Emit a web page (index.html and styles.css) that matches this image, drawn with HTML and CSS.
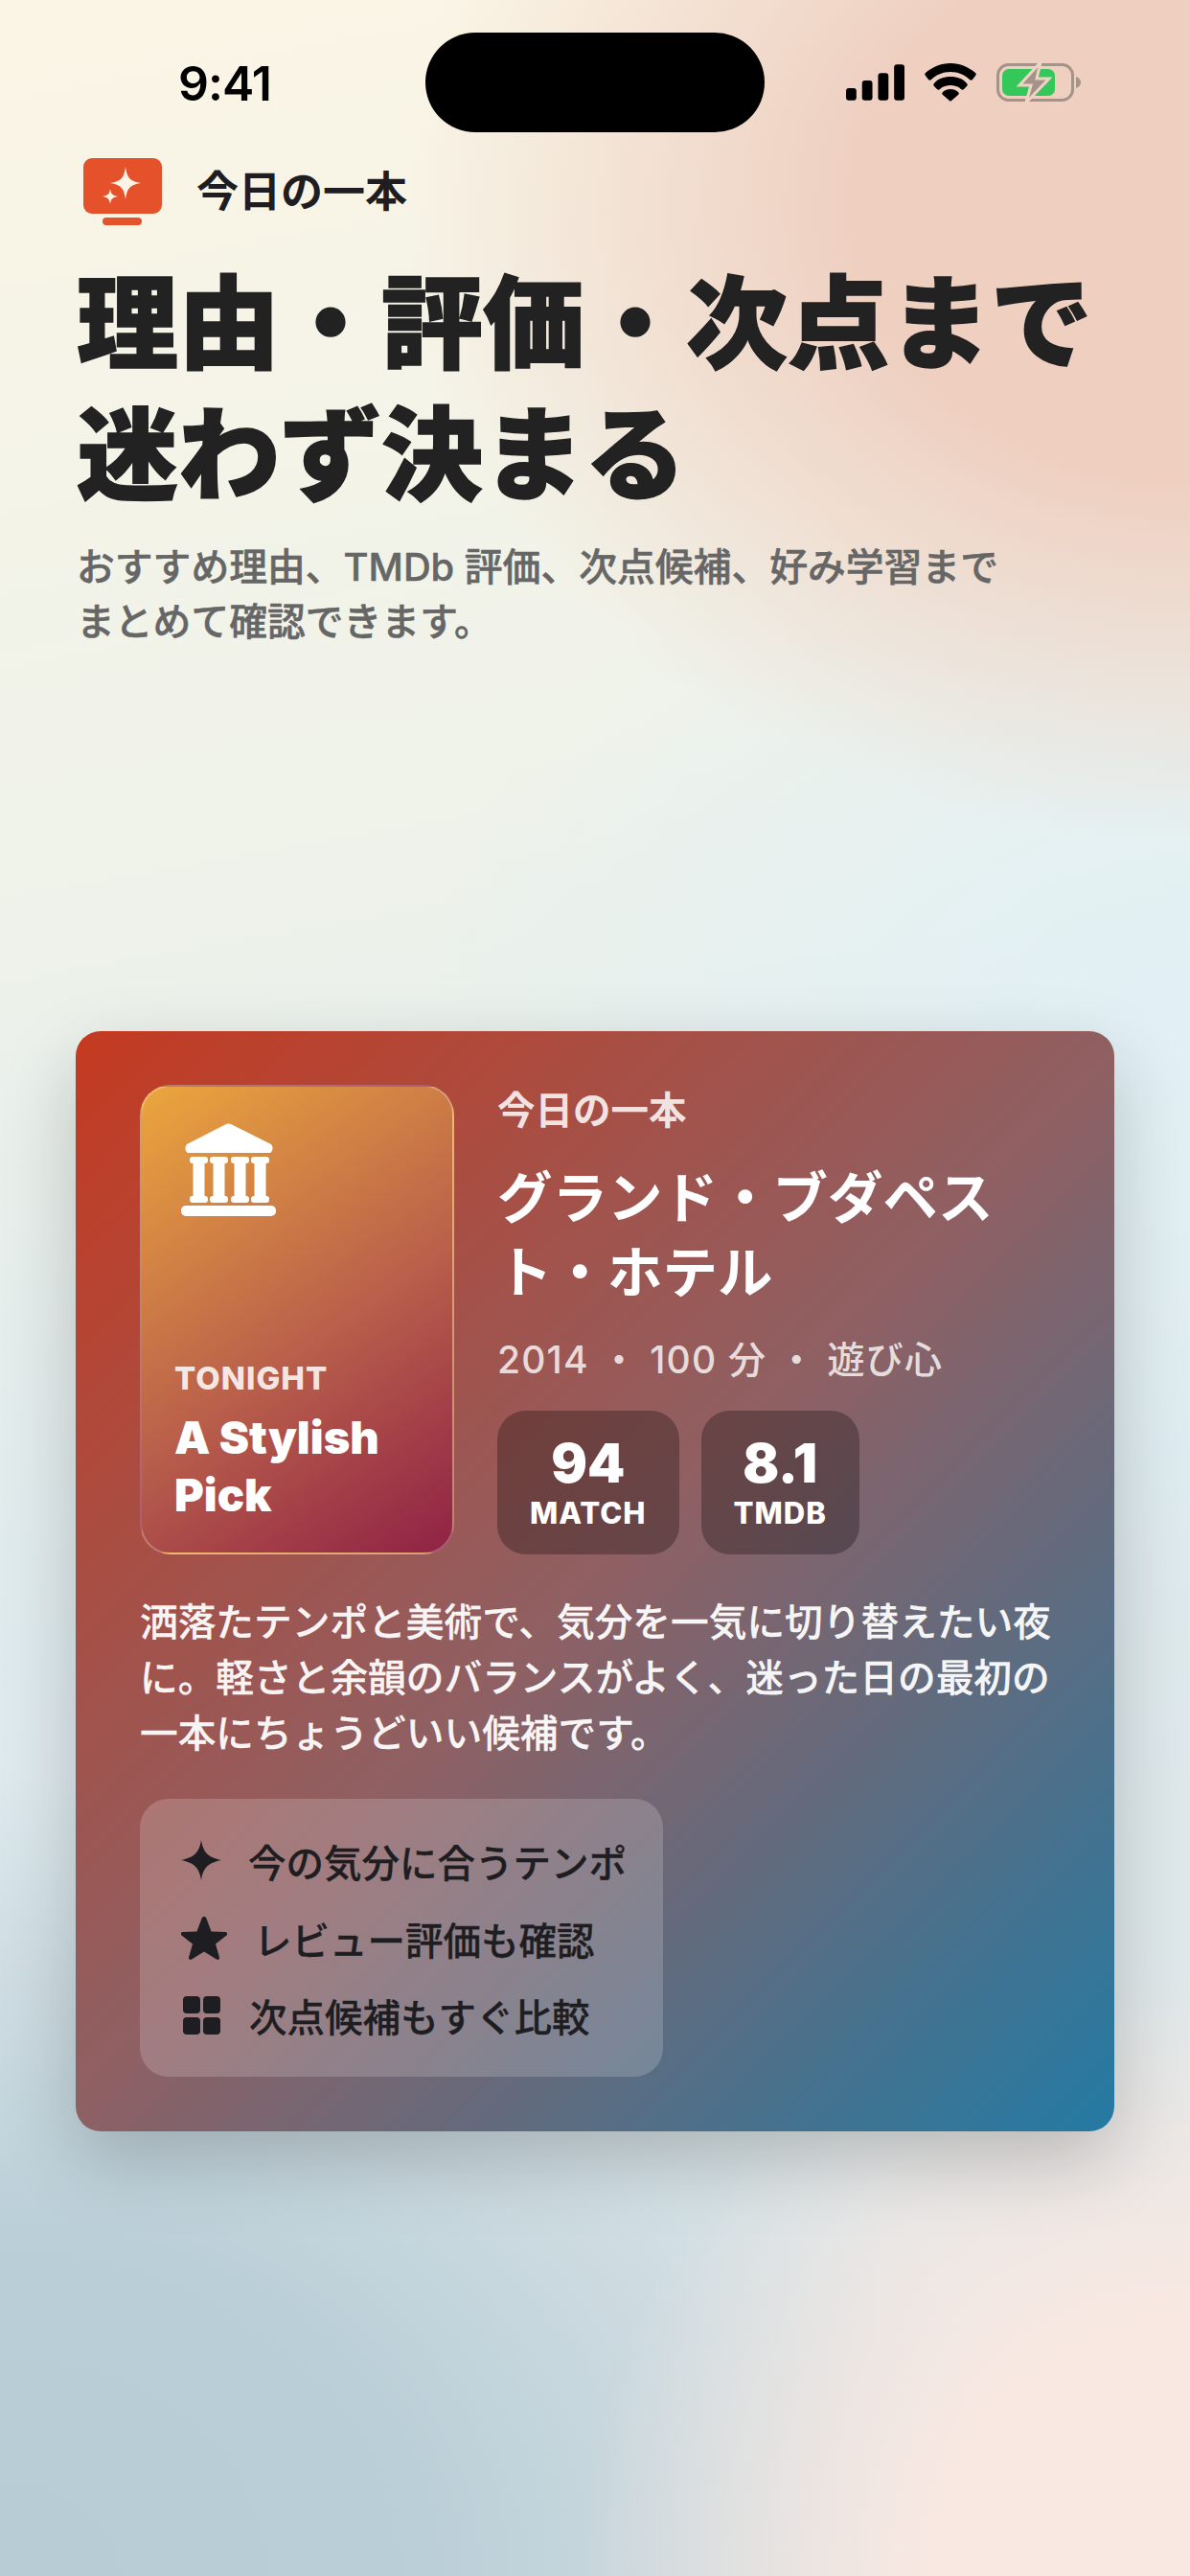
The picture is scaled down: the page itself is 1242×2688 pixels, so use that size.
FILE: index.html
```html
<!DOCTYPE html>
<html lang="ja">
  <head>
    <meta charset="UTF-8" />
    <meta name="viewport" content="width=device-width, initial-scale=1.0" />
    <title>今日の一本</title>
    <link rel="stylesheet" href="styles.css">
  </head>

  <body>
    <div class="status-bar">
      <span class="status-time">9:41</span>
      <div class="island"></div>
      <div class="status-icons">
        <svg width="61" height="38" viewBox="0 0 62 38">
          <rect x="0" y="25" width="11" height="13" rx="3" fill="#000" />
          <rect x="17" y="17" width="11" height="21" rx="3" fill="#000" />
          <rect x="34" y="9" width="11" height="29" rx="3" fill="#000" />
          <rect x="51" y="0" width="11" height="38" rx="3" fill="#000" />
        </svg>
        <svg width="54" height="40" viewBox="0 0 54 40">
          <path d="M27 0C17 0 8 4 1 10c-1 1-1 2 0 3l3 4c1 1 2 1 3 0 5-5 12-8 20-8s15 3 20 8c1 1 2 1 3 0l3-4c1-1 1-2 0-3C46 4 37 0 27 0z" fill="#000" />
          <path d="M27 14c-7 0-13 2-17 7-1 1-1 2 0 3l3 3c1 1 2 1 3 0 3-3 7-4 11-4s8 1 11 4c1 1 2 1 3 0l3-3c1-1 1-2 0-3-4-5-10-7-17-7z" fill="#000" />
          <path d="M27 27c-3 0-6 1-8 3-1 1-1 2 0 3l7 6c1 1 1 1 2 0l7-6c1-1 1-2 0-3-2-2-5-3-8-3z" fill="#000" />
        </svg>
        <svg width="88" height="42" viewBox="0 0 88 42">
          <rect x="1.500" y="2.500" width="78" height="37" rx="11" fill="none" stroke="#a39389" stroke-width="3" />
          <rect x="6" y="7" width="55" height="28" rx="7" fill="#34c759" />
          <path d="M83 15c3 1 5 3 5 6s-2 5-5 6z" fill="#a39389" />
          <path d="M46 0L24 24h12l-5 18 24-25H42z" fill="#a39389" stroke="#efd4c6" stroke-width="3" />
        </svg>
      </div>
    </div>

    <header class="app-head">
      <svg class="app-icon" width="82" height="70" viewBox="0 0 82 70">
        <rect x="0" y="0" width="82" height="58" rx="9" fill="#e5512a" />
        <rect x="20" y="62" width="41" height="8" rx="4" fill="#e5512a" />
        <path d="M44 9c1.500 11 4 15 16 17-12 2-14.500 6-16 17-1.500-11-4-15-16-17 12-2 14.500-6 16-17z" fill="#fdf3e6" />
        <path d="M28 32c.8 5 2 7 8 8-6 1-7.200 3-8 8-.8-5-2-7-8-8 6-1 7.200-3 8-8z" fill="#fdf3e6" />
      </svg>
      <span class="app-name">今日の一本</span>
    </header>

    <section class="intro">
      <h1>理由・評価・次点まで<br />迷わず決まる</h1>
      <p>おすすめ理由、TMDb 評価、次点候補、好み学習まで<br />まとめて確認できます。</p>
    </section>

    <section class="pick-card">
      <div class="pick-top">
        <div class="poster">
          <svg class="poster-icon" width="99" height="97" viewBox="0 0 99 97">
            <path d="M46 1.500c2-1.200 5-1.200 7 0l40 20c4 2 3 9.500-1 9.500H8c-4 0-5-7.500-1-9.500z" fill="#fff" />
            <g fill="#fff">
              <rect x="9" y="35" width="19" height="7" rx="3" />
              <rect x="30" y="35" width="19" height="7" rx="3" />
              <rect x="52" y="35" width="19" height="7" rx="3" />
              <rect x="73" y="35" width="19" height="7" rx="3" />
              <rect x="12.500" y="40" width="12" height="38" />
              <rect x="33.500" y="40" width="12" height="38" />
              <rect x="55.500" y="40" width="12" height="38" />
              <rect x="76.500" y="40" width="12" height="38" />
              <rect x="9" y="76" width="19" height="7" rx="3" />
              <rect x="30" y="76" width="19" height="7" rx="3" />
              <rect x="52" y="76" width="19" height="7" rx="3" />
              <rect x="73" y="76" width="19" height="7" rx="3" />
              <rect x="0" y="86" width="99" height="11" rx="5" />
            </g>
          </svg>
          <div class="poster-text">
            <div class="poster-label">TONIGHT</div>
            <div class="poster-title">A Stylish<br />Pick</div>
          </div>
        </div>

        <div class="pick-info">
          <div class="pick-eyebrow">今日の一本</div>
          <h2>グランド・ブダペス<br />ト・ホテル</h2>
          <div class="pick-meta">2014 ・ 100 分 ・ 遊び心</div>
          <div class="stats">
            <div class="stat">
              <span class="stat-num">94</span>
              <span class="stat-label">MATCH</span>
            </div>
            <div class="stat">
              <span class="stat-num">8.1</span>
              <span class="stat-label">TMDB</span>
            </div>
          </div>
        </div>
      </div>

      <p class="pick-desc">洒落たテンポと美術で、気分を一気に切り替えたい夜<br />に。軽さと余韻のバランスがよく、迷った日の最初の<br />一本にちょうどいい候補です。</p>

      <ul class="reasons">
        <li>
          <svg width="42" height="42" viewBox="0 0 42 42">
            <path d="M21 0c2 13 7 18 21 21-14 3-19 8-21 21-2-13-7-18-21-21 14-3 19-8 21-21z" fill="#1e1e22" />
          </svg>
          今の気分に合うテンポ
        </li>
        <li>
          <svg width="48" height="46" viewBox="0 0 48 46">
            <path d="M24 1c1 0 2 .6 2.500 2l5 13.500 14.500.5c2.500 0 3 2.300 1.500 3.500L36 29.500l4 14c.5 2-1.500 3-3 2L24 37.500 11 45.500c-1.500 1-3.500 0-3-2l4-14L.5 20.500C-1 19.300-.5 17 2 17l14.500-.5 5-13.500c.5-1.400 1.500-2 2.500-2z" fill="#1e1e22" />
          </svg>
          レビュー評価も確認
        </li>
        <li class="reason-grid">
          <svg width="39" height="40" viewBox="0 0 39 40">
            <rect x="0" y="0" width="18" height="18" rx="4" fill="#1e1e22" />
            <rect x="21" y="0" width="18" height="18" rx="4" fill="#1e1e22" />
            <rect x="0" y="22" width="18" height="18" rx="4" fill="#1e1e22" />
            <rect x="21" y="22" width="18" height="18" rx="4" fill="#1e1e22" />
          </svg>
          次点候補もすぐ比較
        </li>
      </ul>
    </section>
  </body>
</html>
```

FILE: styles.css
```css
* {
  box-sizing: border-box;
}

html,
body {
  margin: 0;
  padding: 0;
}

body {
  width: 1242px;
  height: 2688px;
  overflow: hidden;
  font-family: Inter, "Noto Sans CJK JP", sans-serif;
  color: #1e1e22;
  background:
    radial-gradient(ellipse 820px 660px at 100% 8%, #eecfc0 0%, #eecfc0 42%, rgba(238, 207, 192, 0) 100%),
    radial-gradient(ellipse 640px 640px at 100% 100%, #f9e8e1 0%, #f9e8e1 40%, rgba(249, 232, 225, 0) 100%),
    radial-gradient(ellipse 1050px 840px at 0% 100%, #b7ccd5 0%, #b9ced7 40%, rgba(183, 204, 213, 0) 100%),
    radial-gradient(ellipse 800px 600px at 100% 40%, #e1f0f5 0%, rgba(225, 240, 245, 0) 100%),
    linear-gradient(170deg, #fbf5e5 0%, #eef2ea 33%, #deeaee 60%, #dfe5e6 100%);
}

/* ステータスバー */
.status-bar {
  height: 165px;
  padding: 34px 114px 0 186px;
  display: flex;
  align-items: flex-start;
}

.status-time {
  width: 258px;
  margin-top: 28px;
  font-size: 50px;
  line-height: 50px;
  font-weight: 600;
  letter-spacing: -1px;
  color: #000;
}

.island {
  width: 354px;
  height: 104px;
  border-radius: 52px;
  background-color: #000;
}

.status-icons {
  margin-left: auto;
  margin-top: 31px;
  display: flex;
  align-items: center;
  gap: 21px;
}

/* 見出し */
.app-head {
  height: 70px;
  padding-left: 87px;
  display: flex;
  align-items: flex-start;
  gap: 36px;
}

.app-name {
  font-size: 44px;
  line-height: 70px;
  font-weight: 700;
}

.intro {
  padding: 34px 0 0 80px;
}

.intro h1 {
  margin: 0;
  font-size: 106px;
  line-height: 137px;
  font-weight: 900;
  color: #222;
  -webkit-text-stroke: 1.5px #222;
}

.intro p {
  margin: 20px 0 0;
  font-size: 39.8px;
  line-height: 57px;
  font-weight: 500;
  color: #666;
  -webkit-text-stroke: 0.5px #666;
}

/* カード */
.pick-card {
  width: 1084px;
  height: 1148px;
  margin: 399px 0 0 79px;
  padding: 56px 67px;
  border-radius: 26px;
  color: #fff;
  background: linear-gradient(135deg, #c43a20 0%, #8f6063 50%, #237aa3 100%);
  box-shadow: 0 30px 80px rgba(0, 0, 0, 0.2);
}

.pick-top {
  display: flex;
  gap: 45px;
}

.poster {
  width: 328px;
  height: 490px;
  padding: 38px 30px 30px 34px;
  border: 2px solid rgba(255, 255, 255, 0.25);
  border-radius: 32px;
  display: flex;
  flex-direction: column;
  justify-content: space-between;
  background: linear-gradient(145deg, #eba63d 0%, #b95f4b 55%, #8f2245 100%);
}

.poster-icon {
  margin-left: 7px;
}

.poster-label {
  font-size: 33px;
  line-height: 40px;
  font-weight: 800;
  letter-spacing: 1px;
  color: rgba(255, 255, 255, 0.85);
}

.poster-title {
  margin-top: 12px;
  font-size: 47px;
  line-height: 60px;
  font-weight: 900;
}

.pick-info {
  flex: 1;
}

.pick-eyebrow {
  font-size: 39.500px;
  line-height: 54px;
  font-weight: 700;
  color: rgba(255, 255, 255, 0.85);
}

.pick-info h2 {
  margin: 25px 0 0;
  font-size: 57.500px;
  line-height: 78px;
  font-weight: 700;
}

.pick-meta {
  margin-top: 25px;
  font-size: 39px;
  line-height: 54px;
  font-weight: 500;
  letter-spacing: 1.200px;
  color: rgba(255, 255, 255, 0.8);
}

.stats {
  margin-top: 26px;
  display: flex;
  gap: 23px;
}

.stat {
  height: 150px;
  padding: 0 34px;
  border-radius: 30px;
  display: flex;
  flex-direction: column;
  align-items: center;
  justify-content: center;
  background-color: rgba(0, 0, 0, 0.28);
}

.stat-num {
  font-size: 56px;
  line-height: 60px;
  font-weight: 900;
}

.stat-label {
  margin-top: 4px;
  font-size: 31px;
  line-height: 36px;
  font-weight: 800;
  letter-spacing: 1px;
}

.pick-desc {
  margin: 42px 0 0;
  font-size: 39.700px;
  line-height: 58px;
  font-weight: 500;
  white-space: nowrap;
  color: rgba(255, 255, 255, 0.95);
  -webkit-text-stroke: 0.3px rgba(255, 255, 255, 0.95);
}

.reasons {
  width: 546px;
  height: 290px;
  margin: 39px 0 0;
  padding: 24px 0 24px 43px;
  list-style: none;
  border-radius: 30px;
  display: flex;
  flex-direction: column;
  justify-content: space-between;
  background-color: rgba(255, 255, 255, 0.18);
  color: #1e1e22;
}

.reasons li {
  height: 81px;
  display: flex;
  align-items: center;
  gap: 28px;
  font-size: 39.500px;
  font-weight: 500;
  white-space: nowrap;
  -webkit-text-stroke: 0.3px #1e1e22;
}

.reasons .reason-grid {
  gap: 30px;
  padding-left: 2px;
}
```
